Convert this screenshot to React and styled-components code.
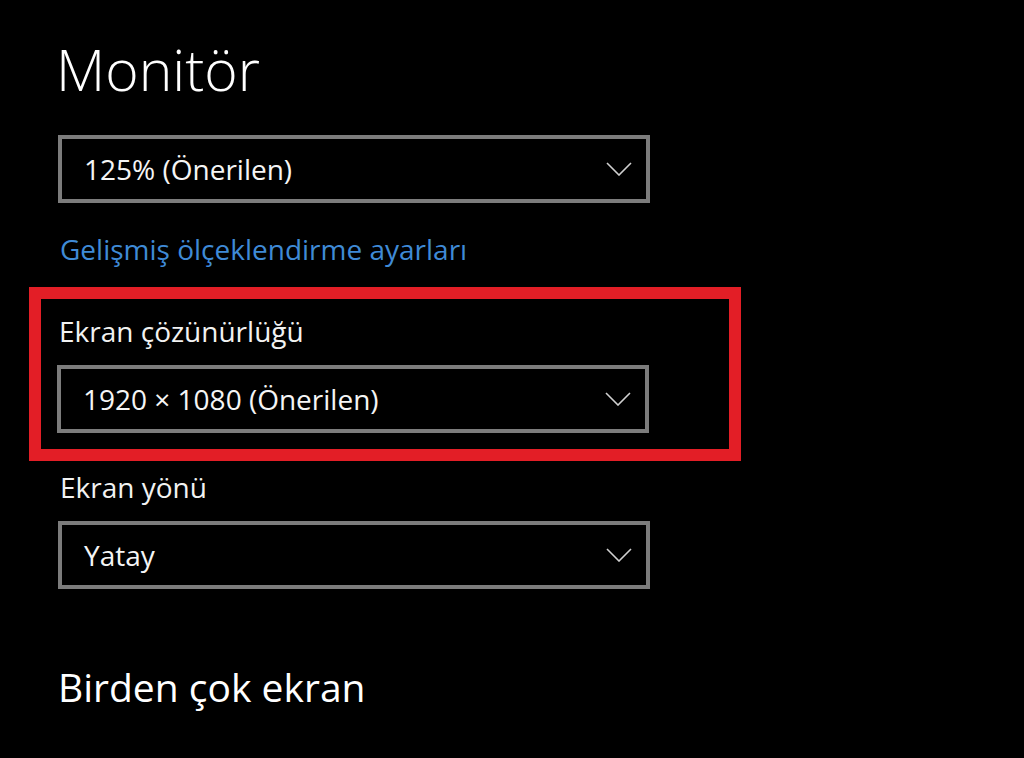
import styled, { createGlobalStyle } from "styled-components";

const GlobalStyle = createGlobalStyle`
  html, body {
    margin: 0;
    background: #000;
  }
  body {
    font-family: "Open Sans", "Noto Sans", sans-serif;
    color: #fff;
  }
`;

const Page = styled.div`
  min-height: 758px;
  box-sizing: border-box;
  padding: 39px 0 0 58px;
  background: #000;
`;

const PageTitle = styled.h1`
  margin: 0 0 0 -2px;
  font-size: 57px;
  line-height: 60px;
  font-weight: 300;
  color: #fff;
`;

const SectionTitle = styled.h2`
  margin: 78px 0 0 0;
  font-size: 39px;
  line-height: 40px;
  font-weight: 400;
  color: #fff;
`;

const Label = styled.div`
  margin: ${(p) => p.$top || 0}px 0 20px 2px;
  font-size: 28px;
  line-height: 28px;
  color: #f2f2f2;
`;

const Select = styled.div`
  width: 592px;
  height: 68px;
  box-sizing: border-box;
  border: 4px solid #7c7c7c;
  margin-top: ${(p) => p.$top || 0}px;
  padding: 0 14px 0 22px;
  display: flex;
  align-items: center;
  justify-content: space-between;
  font-size: 28px;
  line-height: 28px;
  color: #f5f5f5;
`;

const Chevron = styled.svg`
  width: 26px;
  height: 14px;
  flex-shrink: 0;
`;

const SettingsLink = styled.a`
  display: block;
  margin: 32px 0 0 2px;
  font-size: 28px;
  line-height: 28px;
  color: #3f8ad6;
  text-decoration: none;
`;

const Highlight = styled.div`
  width: 712px;
  box-sizing: border-box;
  margin: 24px 0 0 -29px;
  padding: 18px 0 16px 16px;
  border: 12px solid #e31e26;
`;

function Dropdown({ value, top }) {
  return (
    <Select $top={top}>
      <span>{value}</span>
      <Chevron viewBox="0 0 26 14">
        <path d="M1 1 L13 13 L25 1" fill="none" stroke="#d0d0d0" strokeWidth="1.6" />
      </Chevron>
    </Select>
  );
}

export default function App() {
  return (
    <>
      <GlobalStyle />
      <Page>
        <PageTitle>Monitör</PageTitle>
        <Dropdown value="125% (Önerilen)" top={36} />
        <SettingsLink href="#">Gelişmiş ölçeklendirme ayarları</SettingsLink>
        <Highlight>
          <Label>Ekran çözünürlüğü</Label>
          <Dropdown value="1920 × 1080 (Önerilen)" />
        </Highlight>
        <Label $top={12}>Ekran yönü</Label>
        <Dropdown value="Yatay" />
        <SectionTitle>Birden çok ekran</SectionTitle>
      </Page>
    </>
  );
}
